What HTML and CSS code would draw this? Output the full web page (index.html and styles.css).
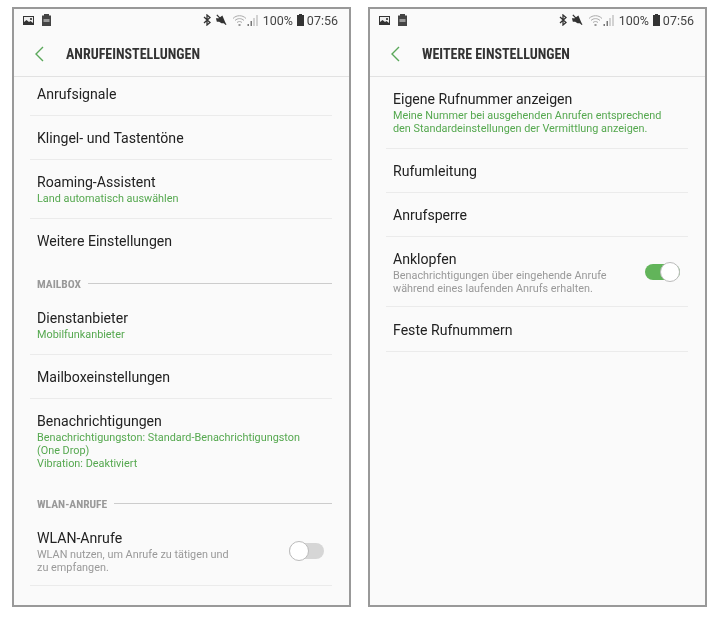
FILE: index.html
```html
<!DOCTYPE html>
<html lang="de">

<head>
  <meta charset="utf-8">
  <title>Anrufeinstellungen</title>
  <link rel="stylesheet" href="styles.css">
</head>

<body>
  <svg class="sprite" width="0" height="0">
    <symbol id="i-picture" viewBox="0 0 11 9">
      <path d="M0 0h11v9H0z" fill="#333" />
      <path d="M1 1h9v7H1z" fill="#eee" />
      <path d="M1 8V6l2.500-2L6 6l1.500-1L10 7v1z" fill="#333" />
      <path d="M7 2h2v2H7z" fill="#555" />
    </symbol>
    <symbol id="i-sd" viewBox="0 0 9 12">
      <path d="M2 0h5v1.500h2V12H0V1.500h2z" fill="#444" />
      <path d="M1.500 5h6v3h-6z" fill="#999" />
    </symbol>
    <symbol id="i-bluetooth" viewBox="0 0 8 12">
      <path d="M1 3l6 5.500L4 11V1l3 2.500L1 9" fill="none" stroke="#333" stroke-width="1.300" />
    </symbol>
    <symbol id="i-mute" viewBox="0 0 13 12">
      <path d="M1 4h3l4-3 3.500 8.500H7L4.500 8H2z" fill="#333" />
      <path d="M2 .5l10 10.500" stroke="#333" stroke-width="1.400" />
    </symbol>
    <symbol id="i-wifi" viewBox="0 0 14 12">
      <g fill="none" stroke="#aaa" stroke-width="1">
        <path d="M.5 4.500C4 .8 10 .8 13.500 4.500" />
        <path d="M2.500 6.500c2.500-2.500 6.500-2.500 9 0" />
        <path d="M4.500 8.500c1.500-1.300 3.500-1.300 5 0" />
      </g>
      <path d="M6 10h2v2H6z" fill="#999" />
    </symbol>
    <symbol id="i-signal" viewBox="0 0 10 12">
      <path d="M0 10h1.500v2H0zM3 7h1.500v5H3z" fill="#777" />
      <path d="M6 4h1v8H6zM9 1h1v11H9z" fill="#aaa" />
    </symbol>
    <symbol id="i-battery" viewBox="0 0 7 12">
      <path d="M2 0h3v1h2v11H0V1h2z" fill="#333" />
    </symbol>
  </svg>

  <div class="screens">
    <div class="phone">
      <div class="statusbar">
        <svg class="ic-picture"><use href="#i-picture" /></svg>
        <svg class="ic-sd"><use href="#i-sd" /></svg>
        <div class="status-right">
          <svg class="ic-bluetooth"><use href="#i-bluetooth" /></svg>
          <svg class="ic-mute"><use href="#i-mute" /></svg>
          <svg class="ic-wifi"><use href="#i-wifi" /></svg>
          <svg class="ic-signal"><use href="#i-signal" /></svg>
          <span class="percent">100%</span>
          <svg class="ic-battery"><use href="#i-battery" /></svg>
          <span>07:56</span>
        </div>
      </div>
      <div class="titlebar">
        <svg class="back" viewBox="0 0 10 16"><path d="M9 1L2 8l7 7" /></svg>
        <h1>ANRUFEINSTELLUNGEN</h1>
      </div>
      <div class="list">
        <div class="row row-first"><div class="title">Anrufsignale</div></div>
        <div class="row"><div class="title">Klingel- und Tastentöne</div></div>
        <div class="row row-sub">
          <div class="title">Roaming-Assistent</div>
          <div class="sub green">Land automatisch auswählen</div>
        </div>
        <div class="row row-last"><div class="title">Weitere Einstellungen</div></div>
        <div class="section"><span>MAILBOX</span><i></i></div>
        <div class="row row-sub">
          <div class="title">Dienstanbieter</div>
          <div class="sub green">Mobilfunkanbieter</div>
        </div>
        <div class="row"><div class="title">Mailboxeinstellungen</div></div>
        <div class="row row-sub row-last">
          <div class="title">Benachrichtigungen</div>
          <div class="sub green">Benachrichtigungston: Standard-Benachrichtigungston<br>(One Drop)<br>Vibration: Deaktiviert</div>
        </div>
        <div class="section"><span>WLAN-ANRUFE</span><i></i></div>
        <div class="row row-sub row-switch">
          <div>
            <div class="title">WLAN-Anrufe</div>
            <div class="sub">WLAN nutzen, um Anrufe zu tätigen und<br>zu empfangen.</div>
          </div>
          <div class="switch"></div>
        </div>
      </div>
    </div>

    <div class="phone">
      <div class="statusbar">
        <svg class="ic-picture"><use href="#i-picture" /></svg>
        <svg class="ic-sd"><use href="#i-sd" /></svg>
        <div class="status-right">
          <svg class="ic-bluetooth"><use href="#i-bluetooth" /></svg>
          <svg class="ic-mute"><use href="#i-mute" /></svg>
          <svg class="ic-wifi"><use href="#i-wifi" /></svg>
          <svg class="ic-signal"><use href="#i-signal" /></svg>
          <span class="percent">100%</span>
          <svg class="ic-battery"><use href="#i-battery" /></svg>
          <span>07:56</span>
        </div>
      </div>
      <div class="titlebar">
        <svg class="back" viewBox="0 0 10 16"><path d="M9 1L2 8l7 7" /></svg>
        <h1>WEITERE EINSTELLUNGEN</h1>
      </div>
      <div class="list">
        <div class="row row-sub">
          <div class="title">Eigene Rufnummer anzeigen</div>
          <div class="sub green">Meine Nummer bei ausgehenden Anrufen entsprechend<br>den Standardeinstellungen der Vermittlung anzeigen.</div>
        </div>
        <div class="row"><div class="title">Rufumleitung</div></div>
        <div class="row"><div class="title">Anrufsperre</div></div>
        <div class="row row-sub row-switch">
          <div>
            <div class="title">Anklopfen</div>
            <div class="sub">Benachrichtigungen über eingehende Anrufe<br>während eines laufenden Anrufs erhalten.</div>
          </div>
          <div class="switch on"></div>
        </div>
        <div class="row row-end"><div class="title">Feste Rufnummern</div></div>
      </div>
    </div>
  </div>
</body>

</html>
```

FILE: styles.css
```css
body {
  margin: 0;
  background-color: #fff;
  font-family: 'Roboto', 'Liberation Sans', sans-serif;
  color: #222;
}

.sprite {
  display: block;
}

.screens {
  display: flex;
  gap: 17px;
  padding: 7px 0 0 12px;
}

.phone {
  box-sizing: border-box;
  width: 339px;
  height: 600px;
  border: 2px solid #999;
  background-color: #fafafa;
  filter: blur(0.3px);
}

/* status bar */
.statusbar {
  display: flex;
  align-items: center;
  height: 22px;
  padding: 0 11px 0 9px;
  font-size: 12.500px;
  color: #444;
}

.status-right {
  display: flex;
  align-items: center;
  margin-left: auto;
}

.ic-picture {
  width: 11px;
  height: 9px;
}

.ic-sd {
  width: 9px;
  height: 12px;
  margin-left: 8px;
}

.ic-bluetooth {
  width: 8px;
  height: 12px;
}

.ic-mute {
  width: 12px;
  height: 12px;
  margin-left: 4px;
}

.ic-wifi {
  width: 15px;
  height: 12px;
  margin-left: 5px;
}

.ic-signal {
  width: 11px;
  height: 12px;
}

.percent {
  margin-left: 5px;
}

.ic-battery {
  width: 7px;
  height: 12px;
  margin: 0 3px 0 4px;
}

/* title bar */
.titlebar {
  display: flex;
  align-items: center;
  box-sizing: border-box;
  height: 46px;
  padding-left: 20px;
  border-bottom: 1px solid #e2e2e2;
}

.back {
  width: 10px;
  height: 16px;
  fill: none;
  stroke: #5aa85a;
  stroke-width: 1.400;
}

.titlebar h1 {
  margin: 0 0 0 22px;
  font-size: 14px;
  font-weight: 700;
  font-stretch: condensed;
  color: #333;
}

/* list */
.list {
  padding: 0 17px 0 16px;
}

.row {
  box-sizing: border-box;
  height: 44px;
  padding: 0 0 0 7px;
  display: flex;
  flex-direction: column;
  justify-content: center;
  border-bottom: 1px solid #ebebeb;
}

.row-first {
  height: 39px;
  padding-bottom: 4px;
}

.row-end {
  height: 45px;
  padding-top: 2px;
}

.row-last {
  border-bottom: none;
}

.row-sub {
  height: auto;
  padding-top: 13px;
  padding-bottom: 13px;
}

.row-switch {
  flex-direction: row;
  justify-content: space-between;
  align-items: center;
  padding-right: 8px;
  padding-bottom: 11px;
}

.title {
  font-size: 14.100px;
  line-height: 18px;
  color: #222;
}

.sub {
  margin-top: 1px;
  font-size: 10.850px;
  line-height: 13px;
  color: #999;
}

.green {
  color: #55a84f;
}

.section {
  display: flex;
  align-items: center;
  gap: 7px;
  box-sizing: border-box;
  height: 33px;
  padding: 8px 0 0 7px;
  font-size: 11.500px;
  font-weight: 700;
  font-stretch: condensed;
  color: #999;
}

.section i {
  flex: 1;
  height: 1px;
  background-color: #ccc;
}

/* switches */
.switch {
  position: relative;
  width: 35px;
  height: 16px;
  margin-top: -2px;
  border-radius: 8px;
  background-color: #d6d6d6;
}

.switch::after {
  content: '';
  position: absolute;
  top: -2px;
  left: 0;
  box-sizing: border-box;
  width: 20px;
  height: 20px;
  border-radius: 50%;
  border: 1px solid #bbb;
  background-color: #fff;
}

.switch.on {
  background-color: #62b45a;
}

.switch.on::after {
  left: 15px;
}
```
